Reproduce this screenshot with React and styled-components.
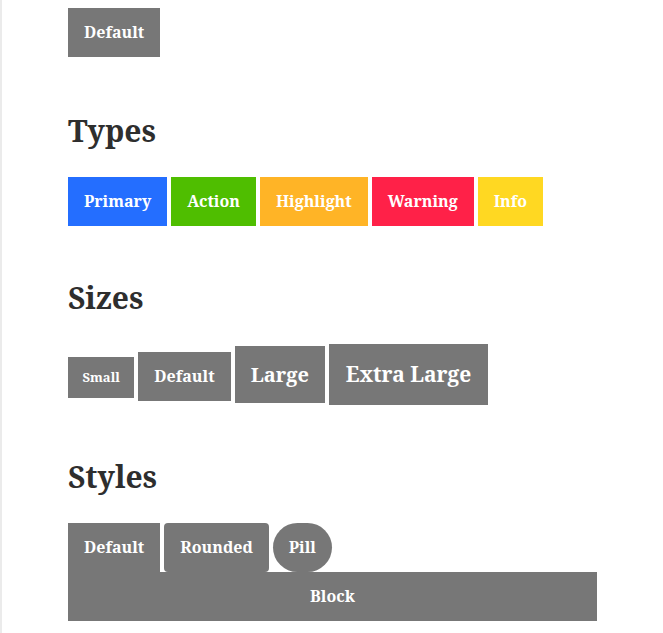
import React from "react";
import styled, { createGlobalStyle, css } from "styled-components";

const GlobalStyle = createGlobalStyle`
  html {
    min-height: 100%;
    border-left: 2px solid #ebebeb;
    background: #fff;
  }
  body {
    margin: 8px;
    font-family: "Noto Serif", "DejaVu Serif", serif;
    color: #333;
  }
`;

const Page = styled.div`
  padding: 0 58px;
`;

const Section = styled.section`
  margin-top: ${(p) => (p.first ? "0" : "52px")};
  padding-bottom: ${(p) => (p.first ? "2px" : "0")};
`;

const Heading = styled.h2`
  margin: 0 0 26px;
  font-size: 30px;
  line-height: 40px;
  font-weight: 700;
  color: #2e2e2e;
`;

const Row = styled.div`
  font-size: 0;
`;

const COLORS = {
  default: "#777777",
  primary: "#246eff",
  action: "#4fbe00",
  highlight: "#ffb426",
  warning: "#ff2148",
  info: "#ffd822",
};

const SIZES = {
  small: { font: 13, height: 41, pad: 14.5 },
  normal: { font: 16, height: 49, pad: 16 },
  large: { font: 20, height: 57, pad: 16 },
  xlarge: { font: 21, height: 61, pad: 17 },
};

const Button = styled.button`
  display: ${(p) => (p.block ? "block" : "inline-block")};
  width: ${(p) => (p.block ? "100%" : "auto")};
  margin: 0 ${(p) => (p.block ? "0" : "4px")} 0 0;
  border: 0;
  font-family: inherit;
  font-weight: 700;
  color: #fff;
  vertical-align: baseline;
  background: ${(p) => COLORS[p.kind || "default"]};
  ${(p) => {
    const s = SIZES[p.size || "normal"];
    return css`
      font-size: ${s.font}px;
      line-height: ${s.height}px;
      height: ${s.height}px;
      padding: 0 ${s.pad}px;
    `;
  }}
  border-radius: ${(p) =>
    p.shape === "pill" ? "200px" : p.shape === "rounded" ? "4px" : "0"};
`;

const App = () => {
  return (
    <>
      <GlobalStyle />
      <Page>
        <Section first>
          <Row>
            <Button>Default</Button>
          </Row>
        </Section>

        <Section>
          <Heading>Types</Heading>
          <Row>
            <Button kind="primary">Primary</Button>
            <Button kind="action">Action</Button>
            <Button kind="highlight">Highlight</Button>
            <Button kind="warning">Warning</Button>
            <Button kind="info">Info</Button>
          </Row>
        </Section>

        <Section>
          <Heading>Sizes</Heading>
          <Row>
            <Button size="small">Small</Button>
            <Button>Default</Button>
            <Button size="large">Large</Button>
            <Button size="xlarge">Extra Large</Button>
          </Row>
        </Section>

        <Section>
          <Heading>Styles</Heading>
          <Row>
            <Button>Default</Button>
            <Button shape="rounded">Rounded</Button>
            <Button shape="pill">Pill</Button>
            <Button block>Block</Button>
          </Row>
        </Section>
      </Page>
    </>
  );
};

export default App;
